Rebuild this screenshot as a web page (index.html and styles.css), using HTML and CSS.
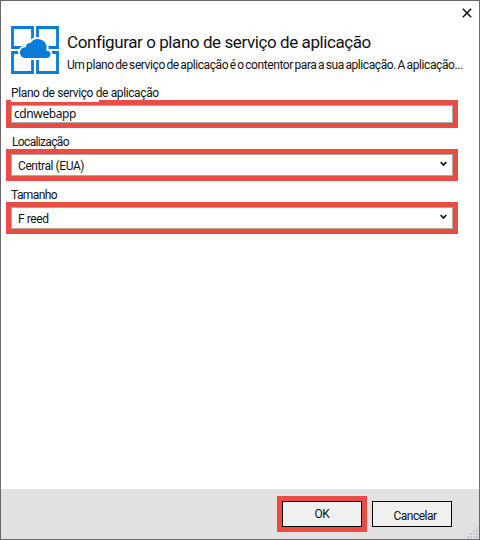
FILE: index.html
```html
<!DOCTYPE html>
<html lang="pt">
<head>
<meta charset="utf-8">
<title>Configurar o plano de serviço de aplicação</title>
<link rel="stylesheet" href="styles.css">
</head>
<body>
<main class="dialog">
  <button class="close" aria-label="Fechar"><svg width="10" height="10" viewBox="0 0 10 10"><path d="M.8.8 9.2 9.2M9.2.8.8 9.2" stroke="#111" stroke-width="1.5"/></svg></button>
  <header class="header">
    <svg class="logo" width="48" height="48" viewBox="0 0 48 48">
      <path d="M1.5 1.5H21.5V21.5H1.5ZM26.5 1.5H46.5V21.5H26.5ZM1.5 26.5H21.5V46.5H1.5ZM26.5 26.5H46.5V46.5H26.5Z" fill="none" stroke="#0a7bd8" stroke-width="2.8"/>
      <path d="M14.5 32C11 32 9 29.5 9 26.5C9 23.3 11.5 21.2 15 21.2C14.8 18.6 17 16.6 19.8 17C21.2 14.4 23.6 13 26.7 13C31.8 13 35.6 16.6 35.6 21.5C35.6 22.5 35.4 23.6 35 24.8C37.6 24.2 39.5 25.8 39.5 28.2C39.5 30.5 37.9 32 35.5 32Z" fill="#0a7bd8" stroke="#fff" stroke-width="4" paint-order="stroke"/>
    </svg>
    <div class="heading">
      <h1 class="title">Configurar o plano de serviço de aplicação</h1>
      <p class="subtitle">Um plano de serviço de aplicação é o contentor para a sua aplicação. A aplicação...</p>
    </div>
  </header>
  <section class="form">
    <label class="label plan">Plano de serviço de aplicação</label>
    <div class="mark mark-input"><div class="field name">cdnwebapp</div></div>
    <label class="label location">Localização</label>
    <div class="mark"><div class="field select"><span class="region">Central (EUA)</span><svg width="7" height="6" viewBox="0 0 7 6"><path d="M.7 1 3.5 4 6.3 1" fill="none" stroke="#111" stroke-width="1.7"/></svg></div></div>
    <label class="label size">Tamanho</label>
    <div class="mark"><div class="field select"><span class="tier">F reed</span><svg width="7" height="6" viewBox="0 0 7 6"><path d="M.7 1 3.5 4 6.3 1" fill="none" stroke="#111" stroke-width="1.7"/></svg></div></div>
  </section>
  <footer class="footer">
    <div class="ok-mark"><button class="btn ok">OK</button></div>
    <button class="btn cancel">Cancelar</button>
    <svg class="grip" width="12" height="12" viewBox="0 0 12 12" fill="#c2c7d6"><path d="M9 0h2v2H9zM6 3h2v2H6zM9 3h2v2H9zM3 6h2v2H3zM6 6h2v2H6zM9 6h2v2H9zM0 9h2v2H0zM3 9h2v2H3zM6 9h2v2H6zM9 9h2v2H9z"/></svg>
  </footer>
</main>
</body>
</html>
```
FILE: styles.css
```css
* { box-sizing: border-box; }
body { margin: 0; font-family: Roboto, "Liberation Sans", sans-serif; font-size: 12px; color: #111; }
.dialog { position: relative; display: flex; flex-direction: column; width: 480px; height: 540px; border: 1px solid #69676a; background: #fff; overflow: hidden; }
.close { position: absolute; top: 7px; right: 7px; display: flex; padding: 0; border: 0; background: none; }
.header { display: flex; gap: 8px; height: 84px; padding: 25px 0 0 10px; }
.logo { flex: none; }
.heading { padding-top: 6px; white-space: nowrap; }
.title { margin: 0; font-size: 17px; font-weight: 400; line-height: 20px; letter-spacing: -0.42px; }
.subtitle { margin: 5px 0 0; line-height: 16px; letter-spacing: -0.41px; word-spacing: -1px; }
.form { display: flex; flex-direction: column; align-items: flex-start; padding-left: 5px; }
.label { height: 16px; margin-left: 5px; line-height: 16px; white-space: nowrap; }
.location { margin-top: 5px; padding-left: 1px; line-height: 18px; letter-spacing: -0.65px; }
.size { margin-top: 5px; line-height: 18px; letter-spacing: -0.6px; }
.mark { width: 452px; height: 32px; border: 5px solid #ea4b44; }
.plan { position: relative; z-index: 1; letter-spacing: -0.38px; }
.plan::after { content: ""; position: absolute; left: 0; top: 15px; width: 88px; height: 2px; background: #fff; z-index: -1; }
.mark-input { height: 28px; margin-top: -1px; }
.field { height: 100%; border: 1px solid #aaa; background: #fff; white-space: nowrap; }
.name { padding-left: 2px; font-family: "Noto Sans", sans-serif; line-height: 16px; letter-spacing: -0.4px; }
.select { display: flex; justify-content: space-between; padding: 0 5px 0 6px; line-height: 23px; letter-spacing: -0.42px; }
.select svg { margin-top: 6px; }
.footer { position: relative; display: flex; gap: 5px; height: 50px; margin-top: auto; padding: 7px 0 0 276px; background: #e1e1e1; }
.ok-mark { height: 36px; border: 5px solid #ea4b44; }
.btn { display: block; width: 80px; height: 26px; padding: 0; border: 1px solid #000; background: #f0f0f0; color: #111; font: 12px/24px Roboto, "Liberation Sans", sans-serif; letter-spacing: -0.4px; }
.cancel { margin-top: 5px; padding: 2px 0 0 6px; letter-spacing: -0.5px; }
.grip { position: absolute; right: 0; bottom: 0; }
```
